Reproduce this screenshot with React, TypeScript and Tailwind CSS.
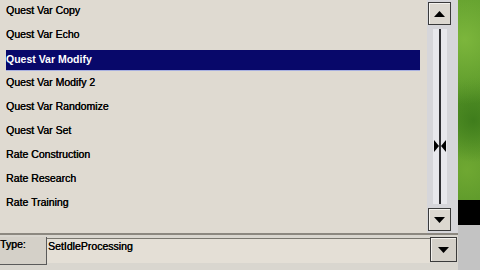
import React from "react";

const items = [
  "Quest Var Copy",
  "Quest Var Echo",
  "Quest Var Modify",
  "Quest Var Modify 2",
  "Quest Var Randomize",
  "Quest Var Set",
  "Rate Construction",
  "Rate Research",
  "Rate Training",
];

const selected = "Quest Var Modify";

function Arrow({ up }: { up?: boolean }) {
  return (
    <svg width="11" height="6" viewBox="0 0 11 6">
      {up ? (
        <polygon points="0,6 11,6 5.5,0" fill="#000" />
      ) : (
        <polygon points="0,0 11,0 5.5,6" fill="#000" />
      )}
    </svg>
  );
}

function ScrollButton({ up }: { up?: boolean }) {
  return (
    <div className="w-[23px] h-[23px] bg-[#dcd8d0] border border-[#3a3a3a] shadow-[inset_1px_1px_0_#f4f2ee] flex items-center justify-center">
      <Arrow up={up} />
    </div>
  );
}

export default function App() {
  return (
    <div
      className="w-[480px] h-[270px] flex overflow-hidden bg-[#dfdad1] text-black"
      style={{ fontFamily: '"Liberation Sans", Arial, sans-serif' }}
    >
      <div className="w-[458px] flex flex-col">
        <div className="h-[233px] flex">
          <div className="w-[427px] flex flex-col pt-[0px]">
            {items.map((item) => (
              <div key={item} className="h-[24px] flex items-center pl-[6px] pr-[7px]">
                {item === selected ? (
                  <div className="w-full h-[21px] mt-[1px] bg-[#08086a] border-b border-[#a8b0e0] text-white font-bold text-[10.5px] flex items-center">
                    {item}
                  </div>
                ) : (
                  <span className="text-[10.5px] pl-[0px] -mt-[3px] [text-shadow:0.35px_0_0_#000]">{item}</span>
                )}
              </div>
            ))}
          </div>
          <div className="w-[31px] bg-[#d6d6da] flex flex-col items-start pl-[1px] pt-[2px]">
            <ScrollButton up />
            <div className="w-[23px] flex-1 flex justify-center py-[4px]">
              <div className="w-[14px] h-full bg-[#e8e8ec] flex flex-col items-center relative">
                <div className="w-[2px] h-full bg-[#303034]" />
                <div className="absolute top-[111px] left-0 w-[14px] h-[12px] flex items-center justify-center">
                  <svg width="14" height="12" viewBox="0 0 14 12">
                    <polygon points="1,0 6,6 1,12" fill="#000" />
                    <polygon points="13,0 8,6 13,12" fill="#000" />
                  </svg>
                </div>
              </div>
            </div>
            <ScrollButton />
            <div className="h-[2px]" />
          </div>
        </div>
        <div className="h-[37px] border-t-2 border-[#8c8880] flex items-start pt-[2px] bg-[#d9d6cf]">
          <div className="w-[47px] h-[28px] bg-[#d4d0c8] border-r border-b border-[#5a5a5a] text-[10.5px] pt-[0px] [text-shadow:0.35px_0_0_#000]">
            Type:
          </div>
          <div className="w-[383px] h-[25px] mt-[1px] bg-[#e4dfd6] border-t border-[#7a776f] text-[10.5px] pt-[0px] pl-[1px] [text-shadow:0.35px_0_0_#000]">
            SetIdleProcessing
          </div>
          <div className="w-[27px] h-[25px] bg-[#d4d0c8] border border-[#3a3a3a] shadow-[inset_1px_1px_0_#f4f2ee] flex items-center justify-center">
            <Arrow />
          </div>
        </div>
      </div>
      <div className="w-[22px] flex flex-col">
        <div className="h-[200px] bg-[radial-gradient(circle_at_30%_20%,#7cb63c_0,transparent_40%),radial-gradient(circle_at_70%_60%,#3f7d1c_0,transparent_35%),radial-gradient(circle_at_40%_85%,#6fa832_0,transparent_40%),linear-gradient(#5c9a2a,#4f8d24)]" />
        <div className="h-[25px] bg-black" />
        <div className="flex-1 bg-[#c3c3c3]" />
      </div>
    </div>
  );
}
